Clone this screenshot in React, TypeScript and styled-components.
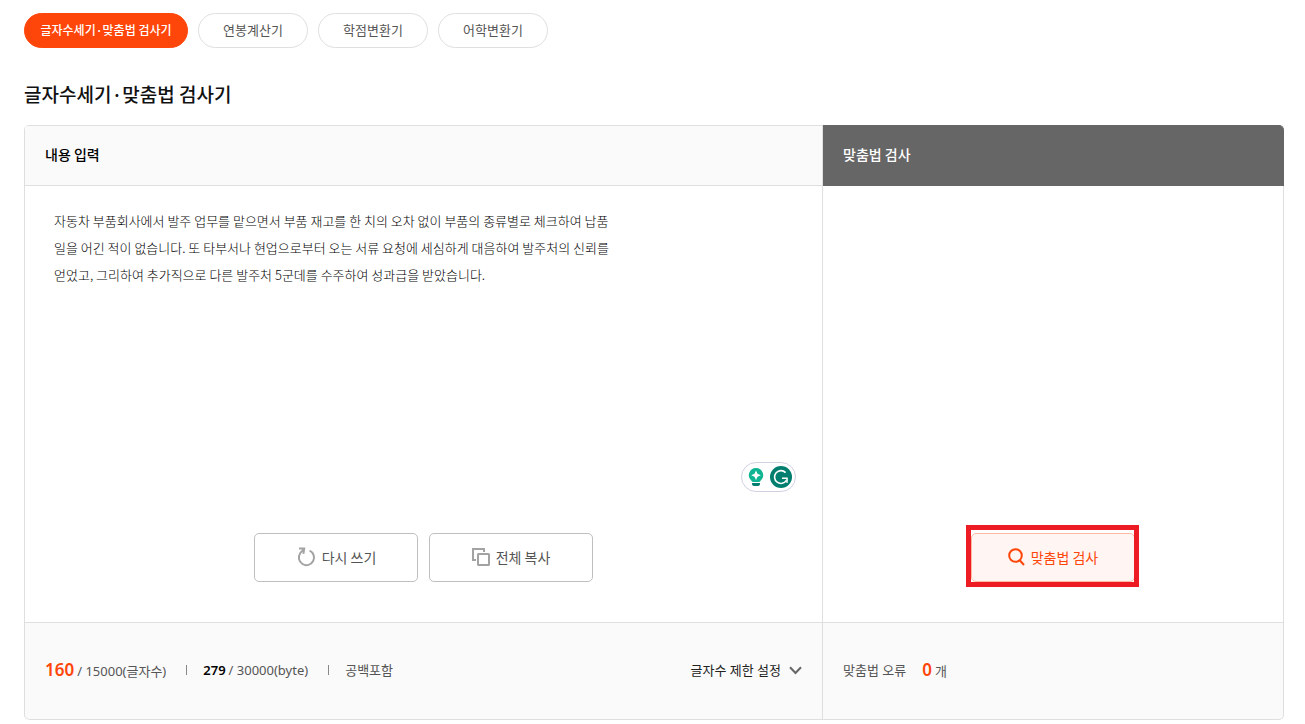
import React, { useState } from "react";
import styled, { createGlobalStyle, css } from "styled-components";

const line = "#dfdfdf";
const accent = "#ff460a";

const GlobalStyle = createGlobalStyle`
  *, *::before, *::after { box-sizing: border-box; }
  body {
    margin: 0;
    background: #fff;
    color: #111;
    font-family: "Noto Sans CJK KR", "Noto Sans", sans-serif;
    font-size: 13px;
    line-height: 20px;
  }
  button, textarea { font: inherit; color: inherit; }
`;

const Page = styled.main`
  padding: 13px 21px 4px 24px;
`;

const Tabs = styled.nav`
  display: flex;
  gap: 10px;
`;

const Tab = styled.a<{ $active?: boolean }>`
  display: flex;
  justify-content: center;
  min-width: ${(p) => (p.$active ? "164px" : "110px")};
  height: 35px;
  padding: 6px 12px;
  border: 1px solid ${(p) => (p.$active ? accent : line)};
  border-radius: 18px;
  background: ${(p) => (p.$active ? accent : "#fff")};
  color: ${(p) => (p.$active ? "#fff" : "#555")};
  font-size: ${(p) => (p.$active ? "12px" : "13px")};
  font-weight: ${(p) => (p.$active ? 500 : 400)};
  text-decoration: none;
  white-space: nowrap;
`;

const Title = styled.h1`
  margin: 31px 0 16px;
  font-size: 19px;
  line-height: 30px;
  font-weight: 500;
`;

const Board = styled.div`
  display: grid;
  grid-template-columns: 19fr 11fr;
`;

const Pane = styled.section`
  display: flex;
  flex-direction: column;
  min-width: 0;
  border-left: 1px solid ${line};
`;

const InputPane = styled(Pane)`
  border-radius: 5px 0 0 5px;
  overflow: hidden;
`;

const PaneHeader = styled.h2<{ $dark?: boolean }>`
  height: 61px;
  margin: 0;
  padding: 18px 20px;
  font-size: 14px;
  line-height: 20px;
  font-weight: 500;
  ${(p) =>
    p.$dark
      ? css`
          background: #666;
          color: #fff;
          border: 1px solid #666;
          border-left: 0;
          border-radius: 0 5px 0 0;
        `
      : css`
          background: #fafafa;
          color: #000;
          border: solid ${line};
          border-width: 1px 0;
        `}
`;

const PaneBody = styled.div<{ $closed?: boolean }>`
  display: flex;
  flex: 1;
  flex-direction: column;
  justify-content: flex-end;
  padding-bottom: 40px;
  border-right: ${(p) => (p.$closed ? `1px solid ${line}` : "0")};
`;

const Editor = styled.div`
  position: relative;
  display: flex;
`;

const TextArea = styled.textarea`
  flex: 1;
  height: 347px;
  padding: 21px 29px;
  border: 0;
  outline: 0;
  resize: none;
  background: transparent;
  color: #000;
  font-weight: 300;
  line-height: 27px;
`;

const Assistant = styled.div`
  position: absolute;
  right: 26px;
  bottom: 41px;
  display: flex;
  align-items: center;
  justify-content: space-between;
  width: 55px;
  height: 30px;
  padding: 0 3px 0 6px;
  border: 1px solid #cfd1e2;
  border-radius: 15px;
  background: #fff;
`;

const Actions = styled.div`
  display: flex;
  justify-content: center;
  gap: 11px;
`;

const ActionButton = styled.button<{ $primary?: boolean }>`
  display: flex;
  align-items: center;
  justify-content: center;
  gap: 6px;
  width: 164px;
  height: 49px;
  padding: 0 0 2px;
  border: 1px solid ${(p) => (p.$primary ? "#ffb9a3" : "#bfbfbf")};
  border-radius: 5px;
  background: ${(p) => (p.$primary ? "#fff5f2" : "#fff")};
  color: ${(p) => (p.$primary ? accent : "#555")};
  font-size: 14px;
  cursor: pointer;
`;

const Highlight = styled.div`
  position: relative;
  &::after {
    content: "";
    position: absolute;
    inset: -8px -4px -5px -5px;
    border: 5px solid #ed1c24;
    pointer-events: none;
  }
`;

const PaneFooter = styled.div<{ $closed?: boolean }>`
  display: flex;
  align-items: center;
  height: 98px;
  padding: 0 20px 2px;
  background: #fafafa;
  color: #555;
  font-family: "Noto Sans", "Noto Sans CJK KR", sans-serif;
  border: solid ${line};
  border-width: ${(p) => (p.$closed ? "1px 1px 1px 0" : "1px 0")};
  border-radius: ${(p) => (p.$closed ? "0 0 5px 0" : "0 0 0 5px")};
`;

const Count = styled.span`
  display: flex;
  align-items: baseline;
  gap: 3px;
  white-space: nowrap;
`;

const Total = styled.strong`
  color: ${accent};
  font-size: 17px;
  font-weight: 600;
`;

const Bytes = styled.strong`
  color: #000;
  font-weight: 600;
`;

const Divider = styled.i`
  width: 1px;
  height: 10px;
  margin: 0 16px 0 20px;
  background: #888;
`;

const LimitButton = styled.button`
  display: flex;
  align-items: center;
  gap: 8px;
  margin-left: auto;
  padding: 0;
  border: 0;
  background: none;
  color: #222;
  white-space: nowrap;
  cursor: pointer;
`;

const ErrorLabel = styled.span`
  margin-right: 16px;
`;

const RedoIcon = () => (
  <svg width="20" height="20" viewBox="0 0 20 20" fill="none" stroke="#a3a3a3" strokeWidth="2" aria-hidden="true">
    <path d="M13.6 3.6A7.6 7.6 0 1 1 4.2 6.2L7.6 2.4" />
    <path d="M3 1.4H8.2L7.4 6.8" />
  </svg>
);

const CopyIcon = () => (
  <svg width="18" height="18" viewBox="0 0 18 18" fill="none" stroke="#a3a3a3" strokeWidth="2" aria-hidden="true">
    <rect x="6" y="6" width="11" height="11" rx="0.5" />
    <path d="M4 12H1V1H12V4" />
  </svg>
);

const SearchIcon = () => (
  <svg width="17" height="18" viewBox="0 0 17 18" fill="none" stroke={accent} strokeWidth="2" aria-hidden="true">
    <circle cx="7.5" cy="7.5" r="6.3" />
    <path d="M11.5 12L16 17" />
  </svg>
);

const ChevronIcon = () => (
  <svg width="13" height="9" viewBox="0 0 13 9" fill="none" stroke="#666" strokeWidth="2" aria-hidden="true">
    <path d="M1 1.2L6.5 7L12 1.2" />
  </svg>
);

const BulbIcon = () => (
  <svg width="16" height="20" viewBox="0 0 16 20" aria-hidden="true">
    <path d="M8 1a7.2 7.2 0 0 0-4.6 12.7L4.6 15h6.8l1.2-1.3A7.2 7.2 0 0 0 8 1z" fill="#0fb593" />
    <path d="M4 16h8v1.2a2 2 0 0 1-2 1.8H6a2 2 0 0 1-2-1.8z" fill="#027e6f" />
    <path d="M8 3.4L9.5 6.7 12.8 8.2 9.5 9.7 8 13 6.5 9.7 3.2 8.2 6.5 6.7z" fill="#fff" />
  </svg>
);

const GIcon = () => (
  <svg width="22" height="22" viewBox="0 0 22 22" aria-hidden="true">
    <circle cx="11" cy="11" r="11" fill="#027e6f" />
    <path d="M15.6 6.6A6.4 6.4 0 1 0 16.4 14.4" fill="none" stroke="#fff" strokeWidth="1.6" />
    <path d="M12 12.2H17V16.8" fill="none" stroke="#fff" strokeWidth="1.6" />
  </svg>
);

const tabs = ["글자수세기·맞춤법 검사기", "연봉계산기", "학점변환기", "어학변환기"];

const sample = [
  "자동차 부품회사에서 발주 업무를 맡으면서 부품 재고를 한 치의 오차 없이 부품의 종류별로 체크하여 납품",
  "일을 어긴 적이 없습니다. 또 타부서나 현업으로부터 오는 서류 요청에 세심하게 대음하여 발주처의 신뢰를",
  "얻었고, 그리하여 추가직으로 다른 발주처 5군데를 수주하여 성과급을 받았습니다.",
].join("\n");

export default function App() {
  const [text, setText] = useState(sample);
  return (
    <>
      <GlobalStyle />
      <Page>
        <Tabs>
          {tabs.map((name, i) => (
            <Tab key={name} href="#" $active={i === 0}>
              {name}
            </Tab>
          ))}
        </Tabs>
        <Title>글자수세기·맞춤법 검사기</Title>
        <Board>
          <InputPane>
            <PaneHeader id="content-label">내용 입력</PaneHeader>
            <PaneBody>
              <Editor>
                <TextArea
                  aria-labelledby="content-label"
                  spellCheck={false}
                  value={text}
                  onChange={(e) => setText(e.target.value)}
                />
                <Assistant>
                  <BulbIcon />
                  <GIcon />
                </Assistant>
              </Editor>
              <Actions>
                <ActionButton type="button" onClick={() => setText("")}>
                  <RedoIcon />
                  다시 쓰기
                </ActionButton>
                <ActionButton type="button">
                  <CopyIcon />
                  전체 복사
                </ActionButton>
              </Actions>
            </PaneBody>
            <PaneFooter>
              <Count>
                <Total>160</Total>
                <span>/ 15000(글자수)</span>
              </Count>
              <Divider />
              <Count>
                <Bytes>279</Bytes>
                <span>/ 30000(byte)</span>
              </Count>
              <Divider />
              <span>공백포함</span>
              <LimitButton type="button">
                글자수 제한 설정
                <ChevronIcon />
              </LimitButton>
            </PaneFooter>
          </InputPane>
          <Pane>
            <PaneHeader $dark>맞춤법 검사</PaneHeader>
            <PaneBody $closed>
              <Actions>
                <Highlight>
                  <ActionButton type="button" $primary>
                    <SearchIcon />
                    맞춤법 검사
                  </ActionButton>
                </Highlight>
              </Actions>
            </PaneBody>
            <PaneFooter $closed>
              <ErrorLabel>맞춤법 오류</ErrorLabel>
              <Count>
                <Total>0</Total>
                <span>개</span>
              </Count>
            </PaneFooter>
          </Pane>
        </Board>
      </Page>
    </>
  );
}
